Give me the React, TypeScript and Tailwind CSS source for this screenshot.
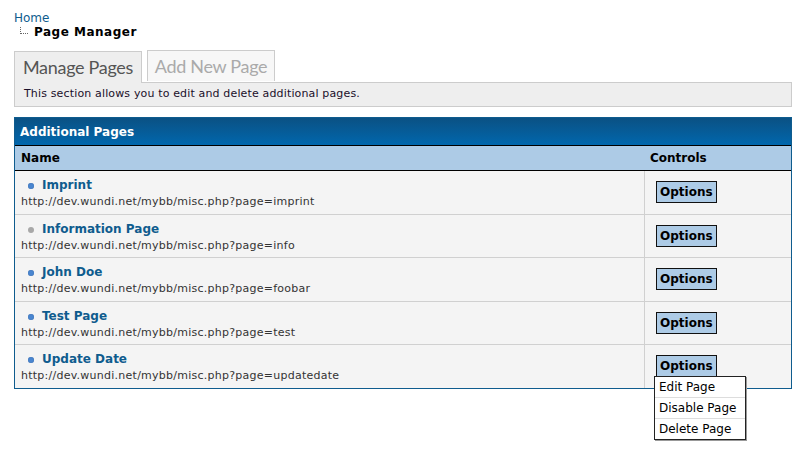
import React from 'react';

const pages = [
  {title: 'Imprint', slug: 'imprint', active: true},
  {title: 'Information Page', slug: 'info', active: false},
  {title: 'John Doe', slug: 'foobar', active: true},
  {title: 'Test Page', slug: 'test', active: true},
  {title: 'Update Date', slug: 'updatedate', active: true},
];

const Bullet = ({active}: {active: boolean}) => (
  <span
    className={`inline-block w-[6px] h-[6px] rounded-full mr-[8px] ml-[7px] ${
      active ? 'bg-[#4a86d0] shadow-[inset_0_0_1px_#1d4f8e]' : 'bg-[#a8a8a8]'
    }`}
  />
);

export default function App() {
  return (
    <div className="min-h-[463px] bg-white px-[14px] pt-[11px] font-['DejaVu_Sans',Verdana,sans-serif] text-[12px] text-black">
      {/* breadcrumb */}
      <div className="leading-[14px]">
        <a className="text-[#0f5c8e] text-[12px]">Home</a>
        <div className="flex items-end">
          <span className="ml-[6px] mb-[5px] w-[8px] h-[7px] border-l border-b border-dotted border-[#666]" />
          <span className="ml-[6px] font-bold text-[12px] tracking-[0.5px]">Page Manager</span>
        </div>
      </div>

      {/* tabs */}
      <div className="mt-[11px] flex items-end gap-[5px] font-['Lato','Open_Sans',sans-serif]">
        <div className="w-[128px] h-[32px] flex items-center justify-center bg-[#eee] border border-[#ccc] border-b-0 text-[#555] text-[18px] tracking-[-0.3px] -mb-px relative z-10">
          Manage Pages
        </div>
        <div className="w-[128px] h-[31px] mb-[1px] flex items-center justify-center bg-[#f7f7f7] border border-[#ccc] border-b-0 text-[#aaa] text-[18px] tracking-[-0.3px]">
          Add New Page
        </div>
      </div>
      <div className="w-[778px] h-[25px] bg-[#eee] border border-[#ccc] flex items-center px-[9px] text-[11px] tracking-[0.15px] text-[#1a0f2a]">
        This section allows you to edit and delete additional pages.
      </div>

      {/* table */}
      <div className="mt-[10px] w-[778px] border border-[#0f5c8e] relative">
        <div className="h-[27px] px-[5px] flex items-center bg-gradient-to-b from-[#0a5184] to-[#0067ad] text-white font-bold text-[12px]">
          Additional Pages
        </div>
        <div className="h-[26px] flex items-center bg-[#adcbe6] border-t border-b border-black font-bold text-[12px]">
          <div className="flex-1 px-[6px]">Name</div>
          <div className="w-[147px] pl-[6px]">Controls</div>
        </div>
        {pages.map((p, i) => (
          <div
            key={p.slug}
            className={`flex bg-[#f4f4f4] ${
              i < pages.length - 1 ? 'border-b border-[#d0d0d0]' : ''
            } ${i % 2 === 0 && i < pages.length - 1 ? 'h-[44px]' : 'h-[43px]'}`}
          >
            <div className="flex-1 pl-[6px] pt-[7px]">
              <div className="flex items-center leading-[15px]">
                <Bullet active={p.active} />
                <span className="font-bold text-[#0f5c8e] text-[12px]">{p.title}</span>
              </div>
              <div className="text-[11px] tracking-[0.25px] text-[#333] leading-[16px] mt-[1px]">
                http://dev.wundi.net/mybb/misc.php?page={p.slug}
              </div>
            </div>
            <div className="w-[147px] border-l border-[#d0d0d0] pl-[11px] pt-[10px] relative">
              <div className="inline-block h-[22px] px-[3px] leading-[20px] bg-[#adcbe6] border border-[#111] font-bold text-[12px]">
                Options
              </div>
              {i === pages.length - 1 && (
                <div className="absolute left-[9px] top-[31px] z-20 w-[92px] bg-white border border-[#222] text-[12px] shadow-[1px_1px_0_#999]">
                  <div className="h-[21px] leading-[20px] px-[4px] border-b border-[#ddd]">Edit Page</div>
                  <div className="h-[21px] leading-[20px] px-[4px] border-b border-[#ddd]">Disable Page</div>
                  <div className="h-[20px] leading-[20px] px-[4px]">Delete Page</div>
                </div>
              )}
            </div>
          </div>
        ))}
      </div>
    </div>
  );
}
